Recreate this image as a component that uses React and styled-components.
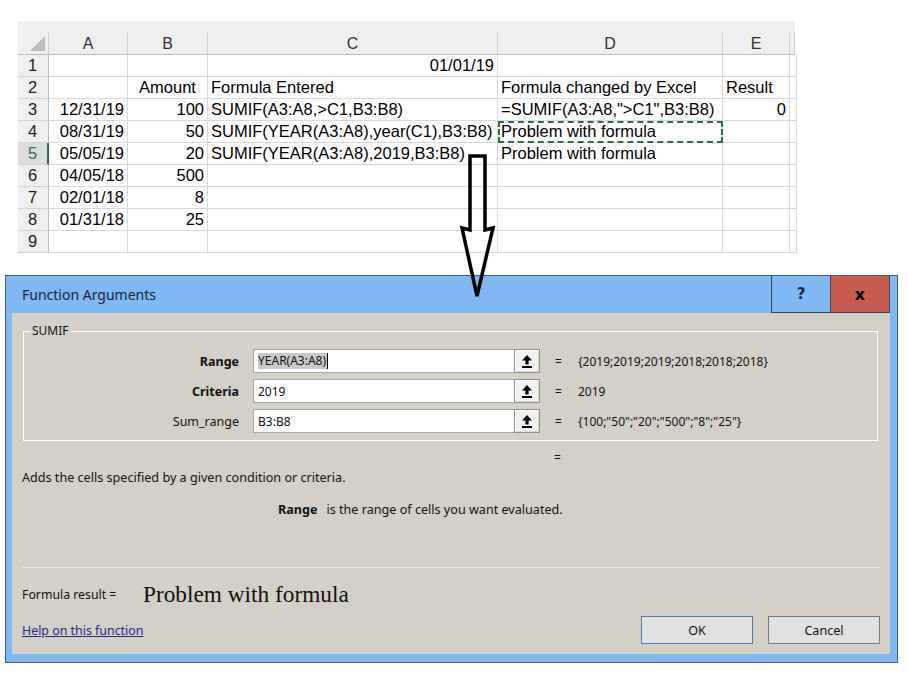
import React from "react";
import styled, { createGlobalStyle } from "styled-components";

const GlobalStyle = createGlobalStyle`
  html, body { margin: 0; padding: 0; background: #ffffff; }
  body { width: 908px; height: 675px; overflow: hidden; }
  * { box-sizing: border-box; }
`;

const Page = styled.div`
  position: relative;
  width: 908px;
  height: 675px;
  padding-top: 21px;
`;

/* ---------------- Spreadsheet ---------------- */
const Sheet = styled.div`
  margin-left: 18px;
  display: grid;
  grid-template-columns: 31px 79px 80px 290px 225px 67px 5px;
  grid-template-rows: 12px 22px repeat(9, 22px);
  font-family: "Liberation Sans", Arial, sans-serif;
  font-size: 16.5px;
  color: #000;
`;

const TopBand = styled.div`
  grid-column: 1 / -1;
  background: #efefef;
`;

const ColHead = styled.div`
  background: #efefef;
  border-right: 1px solid #cfcfcf;
  border-bottom: 1px solid #bdbdbd;
  color: #333;
  font-size: 16px;
  display: flex;
  align-items: center;
  justify-content: center;
  line-height: 1;
`;

const Corner = styled.div`
  position: relative;
  background: #efefef;
  border-right: 1px solid #cfcfcf;
  border-bottom: 1px solid #bdbdbd;
  &::after {
    content: "";
    position: absolute;
    right: 3px;
    bottom: 3px;
    width: 0;
    height: 0;
    border-left: 15px solid transparent;
    border-bottom: 15px solid #bdbdbd;
  }
`;

const RowHead = styled.div`
  background: ${(p) => (p.$active ? "#dcdcdc" : "#efefef")};
  color: ${(p) => (p.$active ? "#3d6b4e" : "#222")};
  border-right: ${(p) => (p.$active ? "2px solid #217346" : "1px solid #bdbdbd")};
  border-bottom: 1px solid #d4d4d4;
  display: flex;
  align-items: center;
  padding-left: 10px;
  font-size: 16.5px;
  line-height: 1;
`;

const Cell = styled.div`
  border-right: 1px solid #d9d9d9;
  border-bottom: 1px solid #d9d9d9;
  display: flex;
  align-items: center;
  justify-content: ${(p) => p.$align || "flex-start"};
  padding: 0 3px;
  white-space: nowrap;
  overflow: visible;
  line-height: 1;
  background: #fff;
  ${(p) =>
    p.$dashed &&
    `outline: 2px dashed #2b6e45; outline-offset: -2px;`}
`;

/* ---------------- Dialog ---------------- */
const Dialog = styled.div`
  margin: 22px 0 0 5px;
  width: 893px;
  height: 388px;
  border: 1px solid #3f5f86;
  background: #80b8f3;
  padding: 0 7px 9px 6px;
  display: flex;
  flex-direction: column;
  font-family: "Noto Sans", "Open Sans", sans-serif;
  color: #111;
`;

const TitleBar = styled.div`
  height: 37px;
  flex: none;
  display: flex;
  align-items: stretch;
`;

const Title = styled.div`
  flex: 1;
  display: flex;
  align-items: center;
  padding-left: 10px;
  font-size: 14px;
  color: #1b2433;
`;

const TitleButton = styled.div`
  width: 60px;
  border: 1px solid #34475f;
  border-top: none;
  margin-left: ${(p) => (p.$close ? "-1px" : "0")};
  background: ${(p) => (p.$close ? "#c75b4f" : "#80b8f3")};
  color: ${(p) => (p.$close ? "#000" : "#1c2b4a")};
  font-family: "DejaVu Sans", sans-serif;
  font-weight: bold;
  font-size: ${(p) => (p.$close ? "16px" : "15px")};
  display: flex;
  align-items: center;
  justify-content: center;
`;

const Body = styled.div`
  flex: 1;
  background: #d4d0c8;
  padding: 0 10px 10px 10px;
  display: flex;
  flex-direction: column;
  font-size: 12px;
`;

const Group = styled.div`
  position: relative;
  margin: 18px 2px 0 1px;
  height: 110px;
  flex: none;
  border: 1px solid #ffffff;
  padding: 17px 0 0 0;
  display: flex;
  flex-direction: column;
  gap: 6px;
`;

const Legend = styled.span`
  position: absolute;
  top: -9px;
  left: 6px;
  padding: 0 2px;
  background: #d4d0c8;
  font-size: 12px;
  line-height: 16px;
`;

const ArgRow = styled.div`
  display: flex;
  align-items: center;
  height: 24px;
`;

const ArgLabel = styled.div`
  width: 215px;
  text-align: right;
  font-weight: ${(p) => (p.$bold ? 700 : 400)};
  font-size: 12.5px;
  margin-right: 14px;
`;

const InputBox = styled.div`
  width: 261px;
  height: 24px;
  background: #fff;
  border: 1px solid #a7a7a7;
  border-right: none;
  display: flex;
  align-items: center;
  padding-left: 4px;
  font-size: 12px;
`;

const Selected = styled.span`
  background: #c9c9c9;
  border-right: 1px solid #000;
  line-height: 16px;
  padding-right: 1px;
`;

const RefButton = styled.div`
  width: 26px;
  height: 24px;
  background: #f2f2f2;
  border: 1px solid #8f8f8f;
  box-shadow: inset 1px 1px 0 #ffffff, inset -1px -1px 0 #d8d8d8;
  display: flex;
  align-items: center;
  justify-content: center;
`;

const Eq = styled.span`
  display: inline-block;
  width: 8px;
  margin-left: ${(p) => p.$ml || 15}px;
  font-size: 12px;
`;

const ArgValue = styled.span`
  margin-left: 15px;
  font-size: 12px;
  white-space: nowrap;
`;

const Line = styled.div`
  height: 16px;
  line-height: 16px;
  margin-top: ${(p) => p.$mt}px;
  white-space: nowrap;
  font-size: 12.6px;
`;

const Bold = styled.b`
  font-weight: 700;
  margin-right: 9px;
  margin-left: 256px;
  font-size: 12.6px;
`;

const Separator = styled.div`
  margin-top: 49px;
  height: 1px;
  background: #ebe9e4;
`;

const ResultRow = styled.div`
  margin-top: 12px;
  height: 28px;
  display: flex;
  align-items: center;
`;

const ResultLabel = styled.span`
  width: 121px;
  font-size: 12.3px;
`;

const ResultValue = styled.span`
  font-family: "Liberation Serif", "Times New Roman", serif;
  font-size: 23.3px;
  color: #111;
`;

const Footer = styled.div`
  margin-top: 8px;
  height: 28px;
  display: flex;
  align-items: center;
`;

const HelpLink = styled.a`
  flex: 1;
  color: #1f2a8a;
  text-decoration: underline;
  font-size: 12.4px;
  cursor: pointer;
`;

const DlgButton = styled.div`
  width: 112px;
  height: 28px;
  margin-left: ${(p) => (p.$gap ? "15px" : "0")};
  background: #e1e1e1;
  border: 1px solid ${(p) => (p.$default ? "#5479a6" : "#7a7a7a")};
  display: flex;
  align-items: center;
  justify-content: center;
  font-size: 12.6px;
`;

const ArrowOverlay = styled.svg`
  position: absolute;
  left: 0;
  top: 0;
  pointer-events: none;
`;

const UpIcon = () => (
  <svg width="12" height="15" viewBox="0 0 12 15">
    <path d="M6 1 L11 6.5 H7.6 V10.5 H4.4 V6.5 H1 Z" fill="#000" />
    <rect x="1" y="12" width="10" height="2" fill="#000" />
  </svg>
);

const rows = [
  ["", "", "01/01/19", "", ""],
  ["", "Amount", "Formula Entered", "Formula changed by Excel", "Result"],
  ["12/31/19", "100", "SUMIF(A3:A8,>C1,B3:B8)", '=SUMIF(A3:A8,">C1",B3:B8)', "0"],
  ["08/31/19", "50", "SUMIF(YEAR(A3:A8),year(C1),B3:B8)", "Problem with formula", ""],
  ["05/05/19", "20", "SUMIF(YEAR(A3:A8),2019,B3:B8)", "Problem with formula", ""],
  ["04/05/18", "500", "", "", ""],
  ["02/01/18", "8", "", "", ""],
  ["01/31/18", "25", "", "", ""],
  ["", "", "", "", ""],
];

const alignOf = (r, c) => {
  if (r === 1 && c === 1) return "center";
  if (c === 0 || c === 1) return "flex-end";
  if (c === 2 && r === 0) return "flex-end";
  if (c === 4 && r === 2) return "flex-end";
  return "flex-start";
};

export default function App() {
  return (
    <>
      <GlobalStyle />
      <Page>
        <Sheet>
          <TopBand />
          <Corner />
          {["A", "B", "C", "D", "E"].map((h) => (
            <ColHead key={h}>{h}</ColHead>
          ))}
          <ColHead />
          {rows.map((row, r) => (
            <React.Fragment key={r}>
              <RowHead $active={r === 4}>{r + 1}</RowHead>
              {row.map((v, c) => (
                <Cell key={c} $align={alignOf(r, c)} $dashed={r === 3 && c === 3}>
                  {v}
                </Cell>
              ))}
              <Cell />
            </React.Fragment>
          ))}
        </Sheet>

        <Dialog>
          <TitleBar>
            <Title>Function Arguments</Title>
            <TitleButton>?</TitleButton>
            <TitleButton $close>x</TitleButton>
          </TitleBar>
          <Body>
            <Group>
              <Legend>SUMIF</Legend>
              <ArgRow>
                <ArgLabel $bold>Range</ArgLabel>
                <InputBox>
                  <Selected>YEAR(A3:A8)</Selected>
                </InputBox>
                <RefButton>
                  <UpIcon />
                </RefButton>
                <Eq>=</Eq>
                <ArgValue>{"{2019;2019;2019;2018;2018;2018}"}</ArgValue>
              </ArgRow>
              <ArgRow>
                <ArgLabel $bold>Criteria</ArgLabel>
                <InputBox>2019</InputBox>
                <RefButton>
                  <UpIcon />
                </RefButton>
                <Eq>=</Eq>
                <ArgValue>2019</ArgValue>
              </ArgRow>
              <ArgRow>
                <ArgLabel>Sum_range</ArgLabel>
                <InputBox>B3:B8</InputBox>
                <RefButton>
                  <UpIcon />
                </RefButton>
                <Eq>=</Eq>
                <ArgValue>{'{100;"50";"20";"500";"8";"25"}'}</ArgValue>
              </ArgRow>
            </Group>
            <Line $mt={9}>
              <Eq $ml={532}>=</Eq>
            </Line>
            <Line $mt={4}>Adds the cells specified by a given condition or criteria.</Line>
            <Line $mt={16}>
              <Bold>Range</Bold>is the range of cells you want evaluated.
            </Line>
            <Separator />
            <ResultRow>
              <ResultLabel>Formula result =</ResultLabel>
              <ResultValue>Problem with formula</ResultValue>
            </ResultRow>
            <Footer>
              <HelpLink>Help on this function</HelpLink>
              <DlgButton $default>OK</DlgButton>
              <DlgButton $gap>Cancel</DlgButton>
            </Footer>
          </Body>
        </Dialog>

        <ArrowOverlay width="908" height="675" viewBox="0 0 908 675">
          <path
            d="M470 156 L485 156 L485 230 L493 228 L477 296 L462 228 L470 230 Z"
            fill="none"
            stroke="#000"
            strokeWidth="3.5"
            strokeLinejoin="miter"
          />
        </ArrowOverlay>
      </Page>
    </>
  );
}
